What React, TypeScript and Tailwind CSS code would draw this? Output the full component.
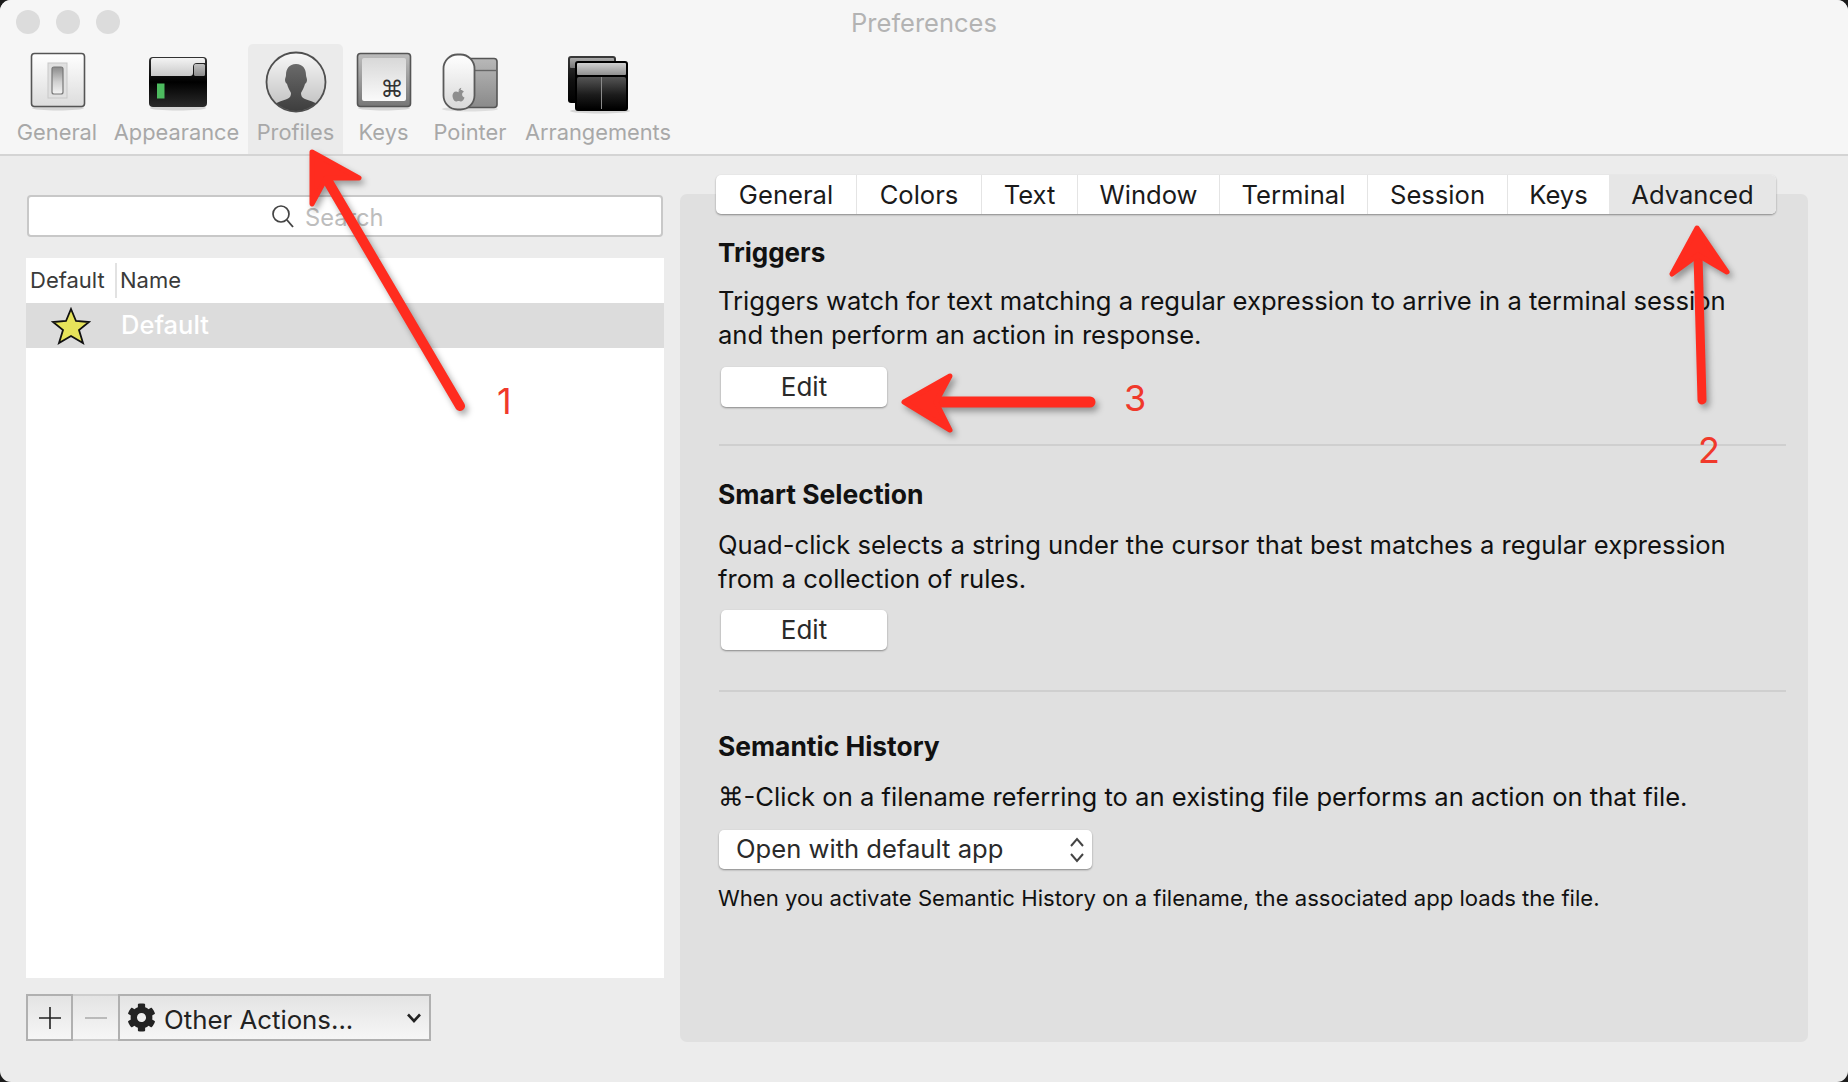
import React from "react";
import { FaCog } from "react-icons/fa";

const FONT = "font-['Inter','Liberation_Sans',sans-serif]";

function Grad({ id, stops }: { id: string; stops: [string, string][] }) {
  return (
    <linearGradient id={id} x1="0" y1="0" x2="0" y2="1">
      {stops.map(([o, c]) => (
        <stop key={o} offset={o} stopColor={c} />
      ))}
    </linearGradient>
  );
}

function IconGeneral() {
  return (
    <svg width="96" height="70" viewBox="9 44 96 70">
      <defs>
        <Grad id="g1" stops={[["0", "#ffffff"], ["1", "#dcdcdc"]]} />
        <Grad id="g1b" stops={[["0", "#8a8a8a"], ["0.55", "#d0d0d0"], ["1", "#f4f4f4"]]} />
      </defs>
      <ellipse cx="58" cy="108" rx="26" ry="2.5" fill="#00000022" />
      <rect x="31.5" y="53.5" width="53" height="53" rx="3" fill="url(#g1)" stroke="#555" strokeWidth="1.6" />
      <rect x="48" y="63" width="19" height="35" fill="#e0e0e0" stroke="#c8c8c8" />
      <rect x="52" y="67" width="11" height="27" rx="2" fill="url(#g1b)" stroke="#777" strokeWidth="1.2" />
    </svg>
  );
}

function IconAppearance() {
  return (
    <svg width="143" height="70" viewBox="105 44 143 70">
      <defs>
        <Grad id="a1" stops={[["0", "#f4f4f4"], ["1", "#c8c8c8"]]} />
        <Grad id="a2" stops={[["0", "#333"], ["0.5", "#000"], ["1", "#2a2a2a"]]} />
        <Grad id="a3" stops={[["0", "#c0c0c0"], ["1", "#8c8c8c"]]} />
      </defs>
      <ellipse cx="178" cy="108" rx="28" ry="2.5" fill="#00000022" />
      <rect x="149" y="57" width="58" height="50" rx="4" fill="url(#a2)" />
      <path d="M151 60 a2 2 0 0 1 2 -2 H203 a2 2 0 0 1 2 2 V63 H197 a4 4 0 0 0 -4 4 V73 a3 3 0 0 1 -3 3 H151 Z" fill="url(#a1)" />
      <rect x="194" y="64" width="11" height="12" rx="1.5" fill="url(#a3)" />
      <rect x="157" y="83.5" width="7.5" height="15" fill="#4dbb5f" />
    </svg>
  );
}

function IconProfile() {
  return (
    <svg width="95" height="70" viewBox="248 44 95 70">
      <defs>
        <Grad id="p1" stops={[["0", "#f8f8f8"], ["1", "#bdbdbd"]]} />
        <Grad id="p2" stops={[["0", "#6a6a6a"], ["1", "#3a3a3a"]]} />
        <clipPath id="pc"><circle cx="296" cy="82" r="29" /></clipPath>
      </defs>
      <circle cx="296" cy="82" r="29.5" fill="url(#p1)" stroke="#4f4f4f" strokeWidth="1.8" />
      <g clipPath="url(#pc)">
        <path d="M296 64 c-7 0 -10 5 -10 11 c0 2 -1 3 -1 5 c0 2 1 3 2 4 c1 4 3 7 4 9 c0 3 -1 5 -4 6 c-5 2 -13 4 -16 8 l-2 8 h54 l-2 -8 c-3 -4 -11 -6 -16 -8 c-3 -1 -4 -3 -4 -6 c1 -2 3 -5 4 -9 c1 -1 2 -2 2 -4 c0 -2 -1 -3 -1 -5 c0 -6 -3 -11 -10 -11 Z" fill="url(#p2)" />
      </g>
    </svg>
  );
}

function IconKeys() {
  return (
    <svg width="81" height="70" viewBox="343 44 81 70">
      <defs>
        <Grad id="k1" stops={[["0", "#bdbdbd"], ["1", "#777"]]} />
        <Grad id="k2" stops={[["0", "#d8d8d8"], ["1", "#fafafa"]]} />
      </defs>
      <ellipse cx="384" cy="108" rx="26" ry="2.5" fill="#00000022" />
      <rect x="357.5" y="53.5" width="53" height="53" rx="3" fill="url(#k1)" stroke="#555" strokeWidth="1.6" />
      <rect x="362" y="58" width="44" height="43" rx="2" fill="url(#k2)" />
      <text x="392" y="97" textAnchor="middle" fontSize="23" fill="#333" fontFamily="DejaVu Sans">⌘</text>
    </svg>
  );
}

function IconPointer() {
  return (
    <svg width="92" height="70" viewBox="424 44 92 70">
      <defs>
        <Grad id="m1" stops={[["0", "#b8b8b8"], ["1", "#8a8a8a"]]} />
        <Grad id="m2" stops={[["0", "#ffffff"], ["1", "#d8d8d8"]]} />
      </defs>
      <ellipse cx="470" cy="109" rx="28" ry="2.5" fill="#00000018" />
      <rect x="450" y="58.5" width="47" height="49" rx="3" fill="url(#m1)" stroke="#555" strokeWidth="1.6" />
      <line x1="465" y1="70.5" x2="497" y2="70.5" stroke="#666" strokeWidth="1.4" />
      <rect x="443.5" y="54.5" width="31" height="55" rx="14" fill="url(#m2)" stroke="#5a5a5a" strokeWidth="1.8" />
      <path d="M458.6 92.2 c-1 -0.5 -1.8 -0.7 -2.5 -0.7 c-2.2 0 -3.6 2 -3.6 4.3 c0 2.8 1.9 5.7 3.5 5.7 c1 0 1.6 -0.6 2.6 -0.6 c1 0 1.6 0.6 2.6 0.6 c1.4 0 2.7 -2 3.3 -3.9 c-1.6 -0.7 -2.4 -1.8 -2.4 -3.2 c0 -1.2 0.7 -2.1 1.8 -2.7 c-0.8 -1.1 -2 -1.6 -3.1 -1.6 c-0.8 0 -1.6 0.2 -2.2 0.6 Z M458.6 91 c0 -1.6 1 -2.8 2.6 -3.2 c0.1 1.7 -1 2.9 -2.6 3.2 Z" fill="#8e8e8e" />
    </svg>
  );
}

function IconArrangements() {
  return (
    <svg width="164" height="70" viewBox="516 44 164 70">
      <defs>
        <Grad id="r1" stops={[["0", "#3a3a3a"], ["0.5", "#111"], ["1", "#000"]]} />
        <Grad id="r2" stops={[["0", "#d0d0d0"], ["1", "#909090"]]} />
        <Grad id="r3" stops={[["0", "#555"], ["0.55", "#1c1c1c"], ["1", "#000"]]} />
        <Grad id="r4" stops={[["0", "#aaa"], ["1", "#777"]]} />
      </defs>
      <ellipse cx="600" cy="111" rx="30" ry="2.5" fill="#00000022" />
      <rect x="568" y="56" width="48" height="47" rx="3" fill="url(#r1)" />
      <rect x="570" y="58" width="44" height="10" rx="1" fill="url(#r4)" />
      <rect x="575" y="61" width="53" height="50" rx="3" fill="#000" />
      <rect x="577" y="63" width="49" height="12" rx="1" fill="url(#r2)" />
      <rect x="577" y="77" width="49" height="32" rx="2" fill="url(#r3)" />
      <line x1="601.5" y1="77" x2="601.5" y2="109" stroke="#8a8a8a" strokeWidth="1" />
    </svg>
  );
}

const TOOLS: { label: string; w: string; icon: React.ReactNode; active?: boolean }[] = [
  { label: "General", w: "w-[96px]", icon: <IconGeneral /> },
  { label: "Appearance", w: "w-[143px]", icon: <IconAppearance /> },
  { label: "Profiles", w: "w-[95px]", icon: <IconProfile />, active: true },
  { label: "Keys", w: "w-[81px]", icon: <IconKeys /> },
  { label: "Pointer", w: "w-[92px]", icon: <IconPointer /> },
  { label: "Arrangements", w: "w-[164px]", icon: <IconArrangements /> },
];

const TABS: { label: string; w: string; active?: boolean }[] = [
  { label: "General", w: "w-[141px]" },
  { label: "Colors", w: "w-[125px]" },
  { label: "Text", w: "w-[96px]" },
  { label: "Window", w: "w-[142px]" },
  { label: "Terminal", w: "w-[148px]" },
  { label: "Session", w: "w-[140px]" },
  { label: "Keys", w: "w-[101px]" },
  { label: "Advanced", w: "flex-1", active: true },
];

function EditButton() {
  return (
    <button className="ml-[3px] flex h-[40px] w-[166px] items-center justify-center rounded-[5px] bg-white pb-[1px] text-[26px] text-[#2a2a2a] shadow-[0_1px_2px_rgba(0,0,0,0.4)]">
      Edit
    </button>
  );
}

function Arrow({ tip, wa, wb, notch, tail, w }: { tip: number[]; wa: number[]; wb: number[]; notch: number[]; tail: number[]; w: number }) {
  return (
    <g>
      <line x1={notch[0]} y1={notch[1]} x2={tail[0]} y2={tail[1]} stroke="#ff2c1f" strokeWidth={w} strokeLinecap="round" />
      <polygon
        points={`${tip} ${wa} ${notch} ${wb}`}
        fill="#ff2c1f"
        stroke="#ff2c1f"
        strokeWidth="5"
        strokeLinejoin="round"
      />
    </g>
  );
}

function Num({ n, cls }: { n: string; cls: string }) {
  return <span className={`absolute text-[36px] leading-none text-[#f0392b] ${cls}`}>{n}</span>;
}

export default function App() {
  return (
    <div className={`relative h-[1082px] w-[1848px] overflow-hidden bg-[#1c1c1c] ${FONT}`}>
      <div className="flex h-full w-full flex-col overflow-hidden rounded-[11px] bg-[#ececec]">
        {/* Toolbar */}
        <header className="relative h-[156px] shrink-0 border-b-2 border-[#d4d4d4] bg-[#f6f6f6]">
          <div className="flex h-[44px] items-start pl-[16px] pt-[10px]">
            <div className="flex gap-[16px]">
              <span className="h-[24px] w-[24px] rounded-full bg-[#dcdcdc]" />
              <span className="h-[24px] w-[24px] rounded-full bg-[#dcdcdc]" />
              <span className="h-[24px] w-[24px] rounded-full bg-[#dcdcdc]" />
            </div>
            <div className="ml-[-112px] mt-[1px] w-full text-center text-[25.5px] leading-[24px] text-[#b3b3b3]">Preferences</div>
          </div>
          <nav className="flex h-[110px] pl-[9px]">
            {TOOLS.map((t) => (
              <div
                key={t.label}
                className={`flex flex-col items-center rounded-t-[5px] ${t.w} ${t.active ? "bg-[#ebebeb]" : ""}`}
              >
                {t.icon}
                <span className="mt-[5px] text-[21.8px] leading-[26px] text-[#a8a8a8]">{t.label}</span>
              </div>
            ))}
          </nav>
        </header>

        {/* Body */}
        <div className="flex flex-1">
          <aside className="ml-[26px] flex w-[638px] flex-col pt-[39px]">
            <div className="mx-[1px] flex h-[42px] items-center rounded-[4px] border-2 border-[#c8c8c8] bg-white pl-[241px]">
              <svg width="26" height="26" viewBox="0 0 26 26" className="mr-[9px]">
                <circle cx="11" cy="11" r="8" fill="none" stroke="#444" strokeWidth="1.7" />
                <line x1="17" y1="17" x2="23" y2="24" stroke="#444" strokeWidth="1.9" />
              </svg>
              <span className="mt-[3px] text-[23.7px] text-[#bdbdbd]">Search</span>
            </div>
            <div className="mt-[21px] flex h-[720px] flex-col bg-white">
              <div className="flex h-[45px] items-center text-[22px] text-[#3a3a3a]">
                <span className="w-[89px] pl-[4px]">Default</span>
                <span className="h-[35px] w-[2px] bg-[#e2e2e2]" />
                <span className="pl-[3px]">Name</span>
              </div>
              <div className="flex h-[45px] items-center bg-[#dcdcdc]">
                <svg width="40" height="38" viewBox="0 0 40 38" className="ml-[25px]">
                  <polygon points="20,2 25,14 38,15 28,23 32,36 20,29 8,36 12,23 2,15 15,14" fill="#e6e35a" stroke="#111" strokeWidth="1.8" strokeLinejoin="miter" />
                </svg>
                <span className="ml-[30px] text-[25.5px] font-medium text-white">Default</span>
              </div>
            </div>
            <div className="mt-[16px] flex h-[47px] w-[405px] text-[#222]">
              <div className="flex w-[47px] items-center justify-center border-2 border-[#b0b0b0] bg-gradient-to-b from-[#e4e4e4] to-[#f6f6f6]">
                <svg width="24" height="24" viewBox="0 0 24 24"><path d="M12 1V23M1 12H23" stroke="#222" strokeWidth="1.6" /></svg>
              </div>
              <div className="flex w-[45px] items-center justify-center border-y-2 border-[#cdcdcd] bg-gradient-to-b from-[#e4e4e4] to-[#f6f6f6]">
                <svg width="24" height="24" viewBox="0 0 24 24"><path d="M1 12H23" stroke="#b5b5b5" strokeWidth="1.8" /></svg>
              </div>
              <div className="flex flex-1 items-center border-2 border-[#b0b0b0] bg-gradient-to-b from-[#e4e4e4] to-[#f6f6f6] pl-[7px] pr-[7px]">
                <FaCog className="text-[29px] text-[#222]" />
                <span className="ml-[8px] mt-[5px] text-[25.8px]">Other Actions...</span>
                <svg width="16" height="12" viewBox="0 0 16 12" className="ml-auto">
                  <path d="M2 2.5L8 9L14 2.5" fill="none" stroke="#222" strokeWidth="2.6" />
                </svg>
              </div>
            </div>
          </aside>

          <section className="relative ml-[16px] mt-[38px] flex h-[848px] w-[1128px] flex-col rounded-[7px] bg-[#e0e0e0] pl-[36px] pr-[22px] text-[#111]">
            <div className="-mt-[19px] flex h-[39px] w-[1060px] rounded-[5px] bg-white text-[25.6px] leading-[42px] text-[#1a1a1a] shadow-[0_1px_2px_rgba(0,0,0,0.4)]">
              {TABS.map((t, i) => (
                <div
                  key={t.label}
                  className={`flex items-center justify-center pt-[1px] ${t.w} ${i < 6 ? "border-r border-[#e4e4e4]" : ""} ${t.active ? "rounded-r-[5px] bg-[#e6e6e6]" : ""}`}
                >
                  {t.label}
                </div>
              ))}
            </div>

            <div className="ml-[2px]">
              <h2 className="mt-[24px] text-[26px] font-bold leading-[30px]">Triggers</h2>
              <p className="mt-[16px] whitespace-nowrap text-[25.6px] leading-[34px]">
                Triggers watch for text matching a regular expression to arrive in a terminal session
                <br />
                and then perform an action in response.
              </p>
              <div className="mt-[15px]"><EditButton /></div>
              <div className="ml-[1px] mt-[37px] h-[2px] w-[1067px] bg-[#cfcfcf]" />

              <h2 className="mt-[33px] text-[26.5px] font-bold leading-[30px]">Smart Selection</h2>
              <p className="mt-[19px] whitespace-nowrap text-[25.6px] leading-[34px]">
                Quad-click selects a string under the cursor that best matches a regular expression
                <br />
                from a collection of rules.
              </p>
              <div className="mt-[14px]"><EditButton /></div>
              <div className="ml-[1px] mt-[40px] h-[2px] w-[1067px] bg-[#cfcfcf]" />

              <h2 className="mt-[39px] text-[26.4px] font-bold leading-[30px]">Semantic History</h2>
              <p className="mt-[18px] whitespace-nowrap text-[25.6px] leading-[35px]">
                <span className="font-['DejaVu_Sans']">⌘</span>-Click on a filename referring to an existing file performs an action on that file.
              </p>
              <div className="ml-[1px] mt-[15px] flex h-[39px] w-[373px] items-center justify-between rounded-[5px] bg-white pl-[17px] pr-[7px] text-[25.6px] text-[#2a2a2a] shadow-[0_1px_2px_rgba(0,0,0,0.4)]">
                <span>Open with default app</span>
                <svg width="16" height="28" viewBox="0 0 16 28">
                  <path d="M2 10L8 3L14 10M2 18L8 25L14 18" fill="none" stroke="#444" strokeWidth="2" />
                </svg>
              </div>
              <p className="mt-[15px] whitespace-nowrap text-[22.1px] leading-[28px]">
                When you activate Semantic History on a filename, the associated app loads the file.
              </p>
            </div>
          </section>
        </div>
      </div>

      {/* Annotations */}
      <svg className="pointer-events-none absolute inset-0 drop-shadow-[3px_4px_3px_rgba(0,0,0,0.35)]" width="1848" height="1082" viewBox="0 0 1848 1082">
        <Arrow tip={[312, 152]} wa={[359, 178]} wb={[312, 204]} notch={[326, 178]} tail={[460, 406]} w={10} />
        <Arrow tip={[1697, 228]} wa={[1727, 272]} wb={[1672, 274]} notch={[1698, 255]} tail={[1702, 400]} w={9} />
        <Arrow tip={[904, 402]} wa={[950, 376]} wb={[950, 430]} notch={[936, 402]} tail={[1090, 402]} w={11} />
      </svg>
      <Num n="1" cls="left-[497px] top-[383px]" />
      <Num n="2" cls="left-[1698px] top-[432px]" />
      <Num n="3" cls="left-[1124px] top-[380px]" />
    </div>
  );
}
